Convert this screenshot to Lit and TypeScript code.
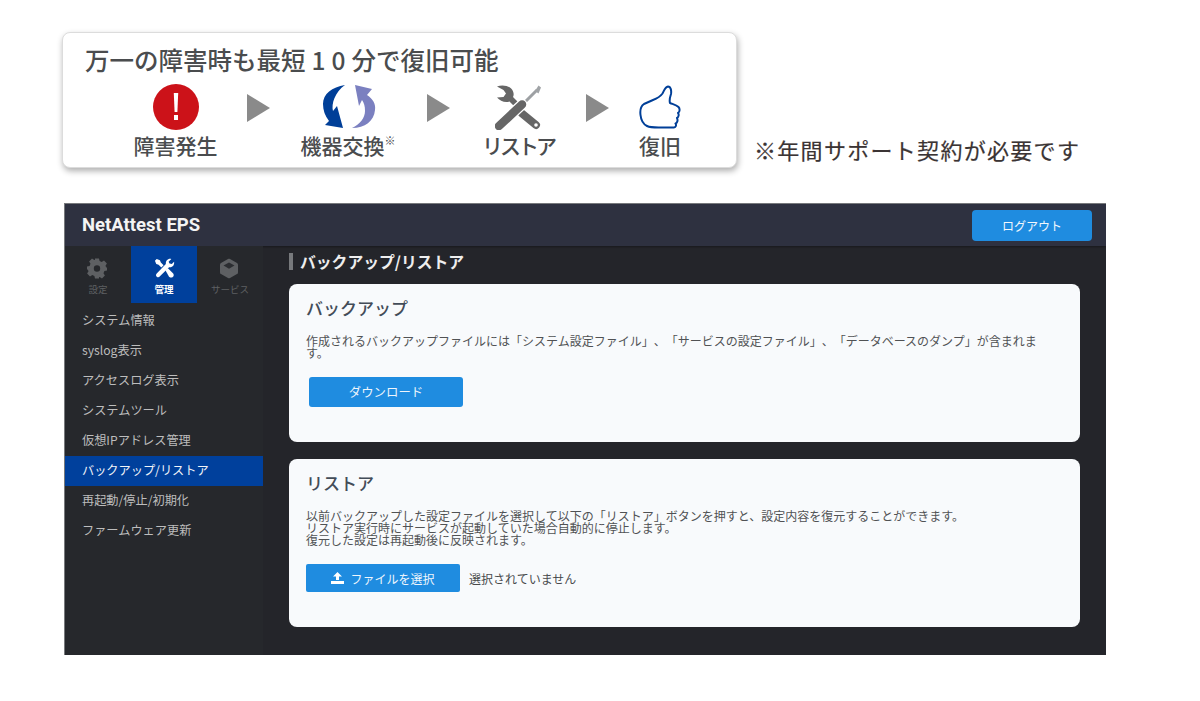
import { LitElement, html, css } from "lit";
import { customElement } from "lit/decorators.js";

const toolsBig = html`<svg width="46" height="46" viewBox="0 0 46 46">
  <path d="M29 19L42 6" stroke="#9da0a3" stroke-width="3"/>
  <path d="M40 7L43.500 1.500L46 3.500L43.500 9.500Z" fill="#a0a3a6"/>
  <path d="M2 2.500C7 0.500 14 1.500 17 5.500C19 8.500 19 11 18 13L24 19L20 23L14.500 17.500C10 19 5 17 2 13.500L8.500 13L11 9.500L8.500 6Z" fill="#666"/>
  <path d="M27 29.500L41 41" stroke="#666" stroke-width="8" stroke-linecap="round"/>
  <circle cx="41" cy="41" r="1.800" fill="#fff"/>
  <path d="M4 42L27 20.500" stroke="#fff" stroke-width="11" stroke-linecap="round"/>
  <path d="M4 42L27 20.500" stroke="#666" stroke-width="8.500" stroke-linecap="round"/>
</svg>`;

const toolsSmall = html`<svg width="23" height="21" viewBox="0 0 46 46">
  <path d="M2 6L6 2L13 5L15 10L21 16L16 21L10 15L5 13Z" fill="#fff"/>
  <path d="M44 8C45 15 41 21 33 20L13 40C9 46 1 39 6 34L26 13C25 6 31 0 38 2L32 8L34 12L39 13Z" fill="#fff"/>
  <path d="M25 27L30 22L42 34C46 40 39 46 33 41Z" fill="#fff"/>
</svg>`;

const arrow = html`<svg class="arrow" viewBox="0 0 24 28"><path d="M0 0L23 14L0 28Z" fill="#8a8a8a"/></svg>`;

@customElement("app-root")
export class AppRoot extends LitElement {
  static styles = css`
    :host {
      display: block;
      width: 1200px;
      height: 701px;
      background: #fff;
      overflow: hidden;
      font-family: "Noto Sans CJK JP", "Noto Sans", sans-serif;
      text-spacing-trim: space-all;
    }
    .top { display: flex; padding: 32px 0 0 62px; }
    .flow {
      width: 675px;
      height: 136px;
      box-sizing: border-box;
      background: #fff;
      border: 1px solid #dcdcdc;
      border-radius: 8px;
      box-shadow: 1px 3px 6px rgba(0, 0, 0, 0.32);
      padding: 9px 0 0 22px;
      color: #4a4c4e;
    }
    .flow h1 {
      margin: 0;
      font-size: 24.500px;
      line-height: 35px;
      font-weight: 500;
      white-space: nowrap;
    }
    .num { letter-spacing: 6px; padding-left: 6px; }
    .steps {
      display: grid;
      grid-template-columns: 81px 31px 24px 29px 85px 42px 24px 30px 74px 31px 24px 29px 42px;
      margin: 7px 0 0 50px;
      align-items: start;
    }
    .step { display: flex; flex-direction: column; align-items: center; }
    .step .ic { height: 46px; display: flex; align-items: center; justify-content: center; }
    .step .ic.shift { margin-left: 12px; }
    .step span {
      margin-top: 2px;
      font-size: 21px;
      line-height: 26px;
      font-weight: 500;
      white-space: nowrap;
      position: relative;
    }
    .step span.kana { letter-spacing: -3px; }
    .step sup {
      position: absolute;
      left: 100%;
      top: 2px;
      font-size: 11px;
      line-height: 12px;
      font-weight: 400;
    }
    .arrow { margin-top: 10px; width: 24px; height: 28px; }
    .note {
      align-self: flex-end;
      margin: 0 0 4px 17px;
      font-size: 22px;
      line-height: 30px;
      color: #3b3434;
      letter-spacing: 1.300px;
      font-weight: 400;
      -webkit-text-stroke: 0.2px #3b3434;
      white-space: nowrap;
    }

    .win {
      margin: 35px 0 0 64px;
      width: 1042px;
      height: 452px;
      box-sizing: border-box;
      border-top: 1px solid #77797c;
      border-left: 1px solid #77797c;
      background: #24252a;
      display: flex;
      flex-direction: column;
      overflow: hidden;
    }
    .bar {
      height: 42px;
      flex: none;
      background: #2e3140;
      display: flex;
      align-items: center;
      justify-content: space-between;
      padding: 0 14px 0 17px;
      box-shadow: 0 1px 2px rgba(0, 0, 0, 0.35);
    }
    .logo {
      color: #f4f4f4;
      font-family: Roboto, "Noto Sans", sans-serif;
      font-size: 18.500px;
      font-weight: 700;
    }
    .logout {
      width: 120px;
      height: 31px;
      border-radius: 4px;
      background: #1f8ce0;
      color: #f2f7fc;
      font-size: 12px;
      display: flex;
      align-items: center;
      justify-content: center;
    }
    .body { flex: 1; display: flex; min-height: 0; }
    .side { width: 198px; flex: none; background: #26282c; }
    .tabs { display: flex; height: 57px; margin-bottom: 3px; }
    .tab {
      width: 66px;
      display: flex;
      flex-direction: column;
      align-items: center;
      padding-top: 12px;
      box-sizing: border-box;
      color: #5e6063;
      font-size: 9.500px;
      line-height: 13px;
    }
    .tab svg { height: 21px; margin-bottom: 4px; }
    .tab svg.nudge { margin-right: 2px; }
    .tab.on { background: #00409c; color: #fff; font-weight: 700; }
    .item {
      height: 30px;
      padding-left: 17px;
      font-size: 12.200px;
      line-height: 28px;
      color: #bdbdbd;
      white-space: nowrap;
    }
    .item.on { background: #00409c; color: #f2f4f8; }
    .main { flex: 1; padding: 7px 26px 0 26px; min-width: 0; }
    .title {
      border-left: 4px solid #77797c;
      height: 17px;
      padding-left: 7px;
      color: #eeeeee;
      font-size: 15.800px;
      font-weight: 700;
      line-height: 17px;
      white-space: nowrap;
    }
    .card {
      background: #f8fafc;
      border-radius: 8px;
      padding: 11px 17px 0;
      color: #484a4c;
      box-sizing: border-box;
      margin-top: 14px;
    }
    .card.b { height: 158px; }
    .card.r { height: 168px; margin-top: 17px; }
    .card h2 {
      margin: 0;
      font-size: 17px;
      line-height: 26px;
      font-weight: 500;
      color: #434c58;
    }
    .card p {
      margin: 0;
      font-size: 12px;
      line-height: 12px;
      width: 740px;
      color: #505254;
    }
    .card.b p { margin-top: 14px; }
    .card.r p { margin-top: 14px; }
    .dl {
      margin: 18px 0 0 3px;
      width: 154px;
      height: 30px;
      border-radius: 3px;
      background: #1f8ce0;
      color: #eef5fc;
      font-size: 12.400px;
      display: flex;
      align-items: center;
      justify-content: center;
    }
    .filerow {
      display: flex;
      align-items: center;
      margin-top: 18px;
      font-size: 12px;
      color: #484a4c;
      gap: 9px;
    }
    .file {
      width: 154px;
      height: 28px;
      border-radius: 2px;
      background: #1f8ce0;
      color: #eef5fc;
      font-size: 12px;
      display: flex;
      align-items: center;
      justify-content: center;
      gap: 6px;
    }
  `;

  render() {
    return html`
      <div class="top">
        <div class="flow">
          <h1>万一の障害時も最短<span class="num">10</span>分で復旧可能</h1>
          <div class="steps">
            <div class="step">
              <div class="ic">
                <svg width="46" height="46" viewBox="0 0 46 46">
                  <circle cx="23" cy="23" r="23" fill="#cc1219"/>
                  <path d="M20.800 9H25.200L24.400 28H21.600Z" fill="#fff"/>
                  <rect x="21" y="31" width="4" height="5" fill="#fff"/>
                </svg>
              </div>
              <span>障害発生</span>
            </div>
            <div></div>
            ${arrow}
            <div></div>
            <div class="step">
              <div class="ic shift">
                <svg width="54" height="46" viewBox="0 0 54 46">
                  <path d="M23 1C10 3 1 10 1 20C1 26 3 32 7 37L3 41L21 44L15 22L11 27C9 20 13 8 23 1Z" fill="#003f98"/>
                  <path d="M33 1L50 5L45 11C51 15 54 20 53 26C52 37 43 44 30 44C38 40 43 34 43 27C43 22 42 19 40 16L37 22Z" fill="#7b80c0"/>
                </svg>
              </div>
              <span>機器交換<sup>※</sup></span>
            </div>
            <div></div>
            ${arrow}
            <div></div>
            <div class="step">
              <div class="ic">${toolsBig}</div>
              <span class="kana">リストア</span>
            </div>
            <div></div>
            ${arrow}
            <div></div>
            <div class="step">
              <div class="ic">
                <svg width="42" height="44" viewBox="0 0 42 44">
                  <path d="M29 1.500C26 2 25 6 23.500 8.500C21 12 18 13.500 14 15L5 19C2 21 1 26 1.500 30C2 35 4 39 8 41C12 43 18 42.500 24 42.500L35 42.500C37 42.500 37.500 40 36.500 38.500C38.500 38 39 35 38 33C40 32 40 29 39 28C41 27 41 23.500 39.500 22C37.500 20 35 19.500 31 18C30 15 31 12 32 9C32.500 6 32 1.500 29 1.500Z" fill="#fff" stroke="#003f98" stroke-width="2" stroke-linejoin="round"/>
                </svg>
              </div>
              <span>復旧</span>
            </div>
          </div>
        </div>
        <div class="note">※年間サポート契約が必要です</div>
      </div>

      <div class="win">
        <div class="bar">
          <div class="logo">NetAttest EPS</div>
          <div class="logout">ログアウト</div>
        </div>
        <div class="body">
          <div class="side">
            <div class="tabs">
              <div class="tab">
                <svg class="nudge" width="20" height="21" viewBox="0 0 20 20">
                  <path fill="#5e6063" fill-rule="evenodd" d="M8 0H12L12.600 2.600L14.700 3.500L17 2.100L19.900 5L18.500 7.300L19.400 9.400L20 8V12L17.400 12.600L16.500 14.700L17.900 17L15 19.900L12.700 18.500L12 18.800L12 20H8L7.400 17.400L5.300 16.500L3 17.900L.1 15L1.500 12.700L.6 10.600L0 12V8L2.600 7.400L3.500 5.300L2.100 3L5 .1L7.300 1.500L8 1.200ZM10 6.800A3.200 3.200 0 1 0 10 13.200A3.200 3.200 0 1 0 10 6.800Z"/>
                </svg>
                設定
              </div>
              <div class="tab on">${toolsSmall}管理</div>
              <div class="tab">
                <svg class="nudge" width="18" height="21" viewBox="0 0 18 20">
                  <path fill="#5e6063" d="M8 .4C8.600 .1 9.400 .1 10 .4L17 4.400C17.600 4.800 18 5.400 18 6V14C18 14.600 17.600 15.200 17 15.600L10 19.600C9.400 19.900 8.600 19.900 8 19.600L1 15.600C.4 15.200 0 14.600 0 14V6C0 5.400 .4 4.800 1 4.400Z"/>
                  <path fill="#2b2d31" d="M9 4L14.500 7L9 10.200L3.500 7Z"/>
                </svg>
                サービス
              </div>
            </div>
            <div class="item">システム情報</div>
            <div class="item">syslog表示</div>
            <div class="item">アクセスログ表示</div>
            <div class="item">システムツール</div>
            <div class="item">仮想IPアドレス管理</div>
            <div class="item on">バックアップ/リストア</div>
            <div class="item">再起動/停止/初期化</div>
            <div class="item">ファームウェア更新</div>
          </div>
          <div class="main">
            <div class="title">バックアップ/リストア</div>
            <div class="card b">
              <h2>バックアップ</h2>
              <p>作成されるバックアップファイルには「システム設定ファイル」、「サービスの設定ファイル」、「データベースのダンプ」が含まれます。</p>
              <div class="dl">ダウンロード</div>
            </div>
            <div class="card r">
              <h2>リストア</h2>
              <p>以前バックアップした設定ファイルを選択して以下の「リストア」ボタンを押すと、設定内容を復元することができます。<br>リストア実行時にサービスが起動していた場合自動的に停止します。<br>復元した設定は再起動後に反映されます。</p>
              <div class="filerow">
                <div class="file">
                  <svg width="13" height="12" viewBox="0 0 13 12">
                    <path fill="#fff" d="M6.500 0L11 4.500H8V8H5V4.500H2ZM0 9H13V12H0Z"/>
                  </svg>
                  ファイルを選択
                </div>
                <span>選択されていません</span>
              </div>
            </div>
          </div>
        </div>
      </div>
    `;
  }
}
